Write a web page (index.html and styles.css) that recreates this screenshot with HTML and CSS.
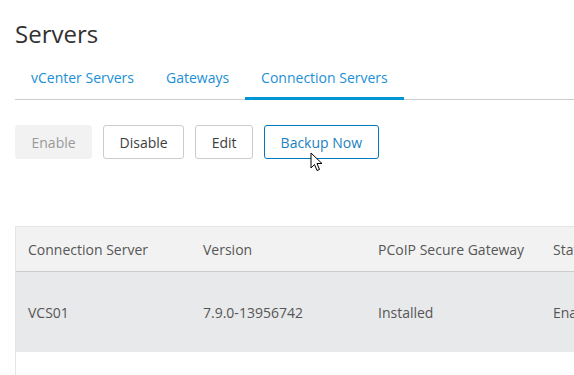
FILE: index.html
```html
<!DOCTYPE html>
<html lang="en">
<head>
  <meta charset="UTF-8">
  <meta name="viewport" content="width=device-width, initial-scale=1.0">
  <title>Servers</title>
  <link rel="stylesheet" href="styles.css">
</head>
<body>
  <h1 class="page-title">Servers</h1>

  <nav class="tabs">
    <a class="tab">vCenter Servers</a>
    <a class="tab">Gateways</a>
    <a class="tab active">Connection Servers</a>
  </nav>

  <div class="toolbar">
    <button class="btn" disabled>Enable</button>
    <button class="btn">Disable</button>
    <button class="btn">Edit</button>
    <button class="btn hover">Backup Now
      <svg class="cursor" width="14" height="21" viewBox="0 0 14 21">
        <path d="M1 1 L1 16 L4.5 12.5 L7 18.5 L9.5 17.5 L7 11.5 L12 11.5 Z" fill="#fff" stroke="#000" stroke-width="1" stroke-linejoin="round"/>
      </svg>
    </button>
  </div>

  <div class="grid">
    <div class="row head">
      <div class="cell">Connection Server</div>
      <div class="cell">Version</div>
      <div class="cell">PCoIP Secure Gateway</div>
      <div class="cell">State</div>
    </div>
    <div class="row selected">
      <div class="cell">VCS01</div>
      <div class="cell">7.9.0-13956742</div>
      <div class="cell">Installed</div>
      <div class="cell">Enabled</div>
    </div>
  </div>
</body>
</html>
```

FILE: styles.css
```css
body {
  margin: 0;
  padding: 0 0 0 15px;
  font-family: "Open Sans", "Liberation Sans", sans-serif;
  color: #565656;
  background: #fff;
  overflow: hidden;
  width: 559px;
  height: 375px;
}

.page-title {
  margin: 0;
  padding-top: 18px;
  font-size: 24px;
  font-weight: 400;
  line-height: 32px;
  color: #313131;
}

.tabs {
  display: flex;
  margin-top: 12px;
  border-bottom: 1px solid #ccc;
}

.tab {
  padding: 0 16px;
  height: 38px;
  line-height: 31px;
  font-size: 14px;
  color: #1c8fd6;
  box-sizing: border-box;
  border-bottom: 3px solid transparent;
  margin-bottom: -1px;
}

.tab.active {
  border-bottom-color: #0095d3;
}

.toolbar {
  display: flex;
  gap: 11px;
  margin-top: 25px;
}

.btn {
  position: relative;
  height: 34px;
  padding: 0 15.5px;
  font-family: inherit;
  font-size: 14px;
  color: #3d3d3d;
  background: #fff;
  border: 1px solid #ccc;
  border-radius: 3px;
}

.btn[disabled] {
  background: #f2f2f2;
  border-color: #f2f2f2;
  color: #9a9a9a;
}

.btn.hover {
  border-color: #0079b8;
  color: #1c7fc0;
}

.cursor {
  position: absolute;
  left: 45px;
  top: 26px;
}

.grid {
  margin-top: 67px;
  width: 720px;
  height: 160px;
  border-left: 1px solid #e5e5e5;
  border-top: 1px solid #e5e5e5;
}

.row {
  display: grid;
  grid-template-columns: 175px 175px 175px 175px;
  font-size: 14px;
}

.row.head {
  height: 44px;
  background: #f2f2f2;
  border-bottom: 1px solid #ccc;
  color: #565656;
}

.row.selected {
  height: 80px;
  background: #e8e9ea;
}

.cell {
  padding-left: 12px;
  display: flex;
  align-items: center;
}
```
